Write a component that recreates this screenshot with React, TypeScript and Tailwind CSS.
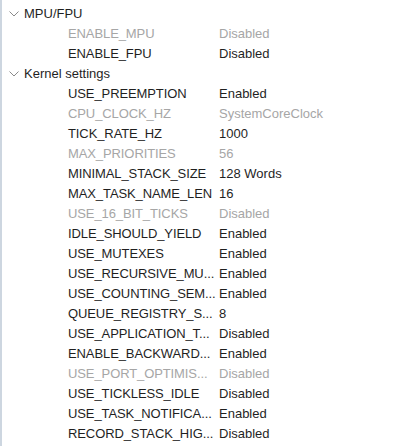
import React from "react";

interface Item {
  name: string;
  value: string;
  disabled?: boolean;
}

interface Group {
  title: string;
  items: Item[];
}

const groups: Group[] = [
  {
    title: "MPU/FPU",
    items: [
      { name: "ENABLE_MPU", value: "Disabled", disabled: true },
      { name: "ENABLE_FPU", value: "Disabled" },
    ],
  },
  {
    title: "Kernel settings",
    items: [
      { name: "USE_PREEMPTION", value: "Enabled" },
      { name: "CPU_CLOCK_HZ", value: "SystemCoreClock", disabled: true },
      { name: "TICK_RATE_HZ", value: "1000" },
      { name: "MAX_PRIORITIES", value: "56", disabled: true },
      { name: "MINIMAL_STACK_SIZE", value: "128 Words" },
      { name: "MAX_TASK_NAME_LEN", value: "16" },
      { name: "USE_16_BIT_TICKS", value: "Disabled", disabled: true },
      { name: "IDLE_SHOULD_YIELD", value: "Enabled" },
      { name: "USE_MUTEXES", value: "Enabled" },
      { name: "USE_RECURSIVE_MU...", value: "Enabled" },
      { name: "USE_COUNTING_SEM...", value: "Enabled" },
      { name: "QUEUE_REGISTRY_S...", value: "8" },
      { name: "USE_APPLICATION_T...", value: "Disabled" },
      { name: "ENABLE_BACKWARD...", value: "Enabled" },
      { name: "USE_PORT_OPTIMIS...", value: "Disabled", disabled: true },
      { name: "USE_TICKLESS_IDLE", value: "Disabled" },
      { name: "USE_TASK_NOTIFICA...", value: "Enabled" },
      { name: "RECORD_STACK_HIG...", value: "Disabled" },
    ],
  },
];

const Chevron: React.FC = () => (
  <svg width="10" height="6" viewBox="0 0 10 6" className="shrink-0">
    <path d="M0.5 0.5 L5 5 L9.5 0.5" fill="none" stroke="#8a8a8a" strokeWidth="1" />
  </svg>
);

const Row: React.FC<{ item: Item }> = ({ item }) => {
  const color = item.disabled ? "text-[#a6a6a6]" : "text-[#1f1f1f]";
  return (
    <div className={`flex h-5 items-center pl-[66px] ${color}`}>
      <div className="w-[151px] shrink-0 whitespace-nowrap pr-1 tracking-[-0.1px]">{item.name}</div>
      <div className="whitespace-nowrap">{item.value}</div>
    </div>
  );
};

export default function App() {
  return (
    <div
      className="h-[446px] w-[418px] overflow-hidden bg-white text-[13px] leading-5"
      style={{ fontFamily: '"Liberation Sans", Arial, sans-serif' }}
    >
      <div className="h-full border-l-2 border-[#cdd6e0] pt-1">
        {groups.map((g) => (
          <div key={g.title}>
            <div className="flex h-5 items-center gap-[5px] pl-[7px] text-[#1f1f1f]">
              <Chevron />
              <span>{g.title}</span>
            </div>
            {g.items.map((it) => (
              <Row key={it.name} item={it} />
            ))}
          </div>
        ))}
      </div>
    </div>
  );
}
